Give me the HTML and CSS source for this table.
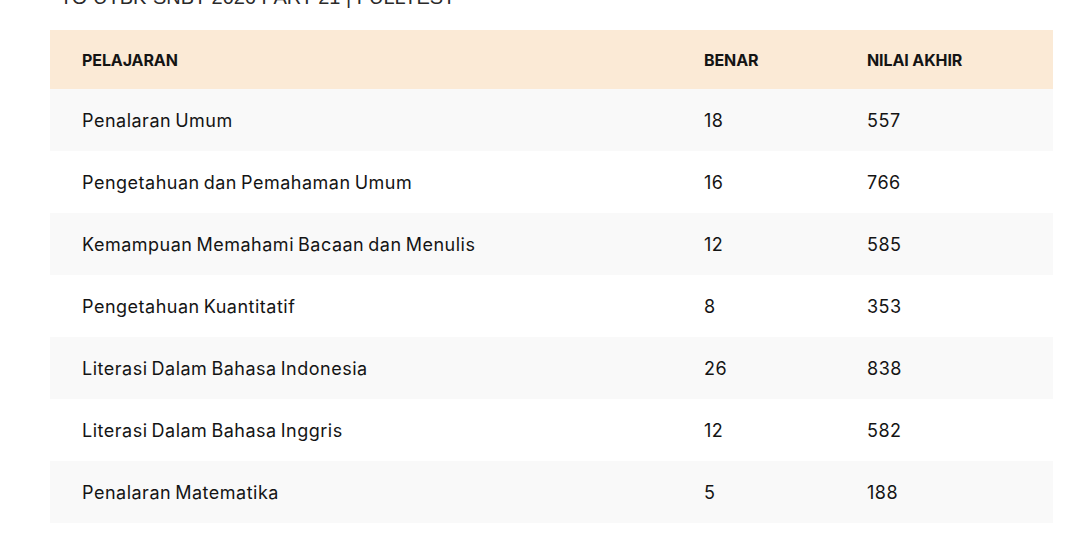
FILE: index.html
```html
<!DOCTYPE html>
<html lang="id">
<head>
<meta charset="utf-8">
<title>Hasil Tryout</title>
<link rel="stylesheet" href="styles.css">
</head>
<body>
<main class="page">
  <h2 class="title">TO UTBK-SNBT 2026 PART 21 | FULLTEST</h2>
  <table class="scores">
    <thead>
      <tr>
        <th class="col-subject">PELAJARAN</th>
        <th class="col-correct">BENAR</th>
        <th class="col-score">NILAI AKHIR</th>
      </tr>
    </thead>
    <tbody>
      <tr><td>Penalaran Umum</td><td class="num">18</td><td class="num">557</td></tr>
      <tr><td>Pengetahuan dan Pemahaman Umum</td><td class="num">16</td><td class="num">766</td></tr>
      <tr><td>Kemampuan Memahami Bacaan dan Menulis</td><td class="num">12</td><td class="num">585</td></tr>
      <tr><td>Pengetahuan Kuantitatif</td><td class="num">8</td><td class="num">353</td></tr>
      <tr><td>Literasi Dalam Bahasa Indonesia</td><td class="num">26</td><td class="num">838</td></tr>
      <tr><td>Literasi Dalam Bahasa Inggris</td><td class="num">12</td><td class="num">582</td></tr>
      <tr><td>Penalaran Matematika</td><td class="num">5</td><td class="num">188</td></tr>
    </tbody>
  </table>
</main>
</body>
</html>
```

FILE: styles.css
```css
html, body {
  margin: 0;
  padding: 0;
  background: #ffffff;
}

body {
  font-family: "Inter", "Noto Sans", sans-serif;
  color: #141414;
}

.page {
  padding: 0 33px 0 50px;
}

.title {
  margin: -13px 0 23px 10px;
  font-family: "Liberation Sans", Arial, sans-serif;
  font-weight: 400;
  font-size: 20px;
  line-height: 20px;
  color: #2a2a2a;
  letter-spacing: 0;
}

.scores {
  width: 1003px;
  border-collapse: collapse;
  table-layout: fixed;
}

.scores th {
  background: #fbead6;
  text-align: left;
  font-size: 16px;
  font-weight: 700;
  letter-spacing: -0.1px;
  height: 59px;
  padding: 0 32px;
  box-sizing: border-box;
}

.col-subject { width: 622px; }
.col-correct { width: 163px; }
.col-score { width: 218px; }

.scores td {
  height: 62px;
  padding: 1px 32px 0;
  box-sizing: border-box;
  font-size: 18px;
  font-weight: 400;
  letter-spacing: 0.5px;
  word-spacing: -1.5px;
}

.scores tbody tr:nth-child(odd) td {
  background: #f9f9f9;
}

.scores tbody tr:nth-child(even) td {
  background: #ffffff;
}
```
